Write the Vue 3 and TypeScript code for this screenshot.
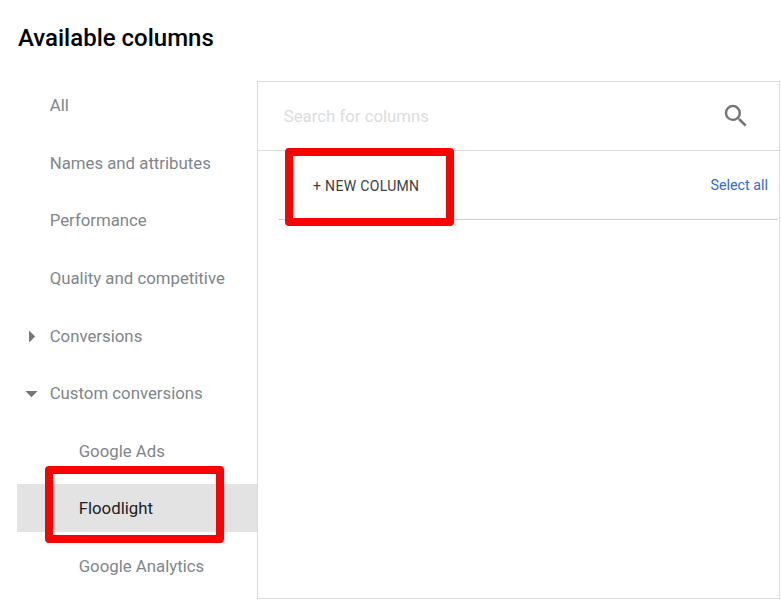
<template>
  <div class="page">
    <h1 class="title">Available columns</h1>
    <div class="body">
      <nav class="sidebar">
        <div
          v-for="item in items"
          :key="item.label"
          class="item"
          :class="{ child: item.child, active: item.active }"
        >
          <svg v-if="item.arrow === 'right'" class="arrow" width="29" height="29" viewBox="0 0 24 24">
            <path d="M10 7l5 5-5 5z" />
          </svg>
          <svg v-if="item.arrow === 'down'" class="arrow" width="29" height="29" viewBox="0 0 24 24">
            <path d="M7 10l5 5 5-5z" />
          </svg>
          <span>{{ item.label }}</span>
        </div>
        <div class="mark mark-side"></div>
      </nav>
      <section class="panel">
        <div class="search">
          <span class="placeholder">Search for columns</span>
          <svg class="search-icon" width="30" height="30" viewBox="0 0 24 24">
            <path d="M15.5 14h-.79l-.28-.27A6.47 6.47 0 0 0 16 9.5 6.5 6.5 0 1 0 9.5 16c1.61 0 3.09-.59 4.23-1.57l.27.28v.79l5 4.99L20.49 19l-4.99-5zm-6 0C7.01 14 5 11.99 5 9.5S7.01 5 9.5 5 14 7.01 14 9.5 11.99 14 9.5 14z" />
          </svg>
        </div>
        <div class="toolbar">
          <span class="new-column">+ NEW COLUMN</span>
          <a class="select-all">Select all</a>
          <div class="mark mark-new"></div>
        </div>
      </section>
    </div>
  </div>
</template>

<script setup lang="ts">
interface NavItem {
  label: string
  child?: boolean
  active?: boolean
  arrow?: 'right' | 'down'
}

const items: NavItem[] = [
  { label: 'All' },
  { label: 'Names and attributes' },
  { label: 'Performance' },
  { label: 'Quality and competitive' },
  { label: 'Conversions', arrow: 'right' },
  { label: 'Custom conversions', arrow: 'down' },
  { label: 'Google Ads', child: true },
  { label: 'Floodlight', child: true, active: true },
  { label: 'Google Analytics', child: true },
]
</script>

<style scoped>
.page {
  width: 781px;
  height: 608px;
  background: #fff;
  font-family: Roboto, "Liberation Sans", sans-serif;
  overflow: hidden;
}

.title {
  margin: 0;
  padding: 24px 0 0 18px;
  height: 57px;
  font-size: 24px;
  line-height: 28px;
  font-weight: 500;
  color: #000;
}

.body {
  display: flex;
  padding-left: 17px;
  height: 518px;
}

.sidebar {
  position: relative;
  width: 240px;
  display: flex;
  flex-direction: column;
  gap: 9.64px;
}

.item {
  position: relative;
  flex: none;
  height: 48px;
  display: flex;
  align-items: center;
  padding-left: 32.7px;
  font-size: 16.8px;
  color: #80868b;
}

.item.child {
  padding-left: 61.7px;
}

.item.active {
  background: #e3e3e3;
  color: #202124;
}

.arrow {
  position: absolute;
  left: 0;
  top: 10px;
  fill: #757575;
}

.panel {
  flex: none;
  width: 523px;
  box-sizing: border-box;
  border: 1px solid #dcdcdc;
}

.search {
  height: 68px;
  display: flex;
  align-items: center;
  justify-content: space-between;
  padding: 0 28px 0 25.7px;
  border-bottom: 1px solid #dcdcdc;
}

.placeholder {
  font-size: 16.8px;
  color: #dadce0;
}

.search-icon {
  fill: #757575;
}

.toolbar {
  position: relative;
  height: 68px;
  margin: 0 1px 0 20px;
  display: flex;
  align-items: center;
  justify-content: space-between;
  padding: 0 10px 0 35px;
  border-bottom: 1px solid #cfcfcf;
}

.new-column {
  font-size: 14px;
  letter-spacing: 0.33px;
  padding-top: 2px;
  color: #3c4043;
}

.select-all {
  font-size: 14.3px;
  color: #3367d6;
}

.mark {
  position: absolute;
  box-sizing: border-box;
  border: 8px solid #f00;
  border-radius: 4px;
}

.mark-side {
  left: 28px;
  top: 385px;
  width: 179px;
  height: 77px;
}

.mark-new {
  left: 7px;
  top: -3px;
  width: 169px;
  height: 78px;
}
</style>
